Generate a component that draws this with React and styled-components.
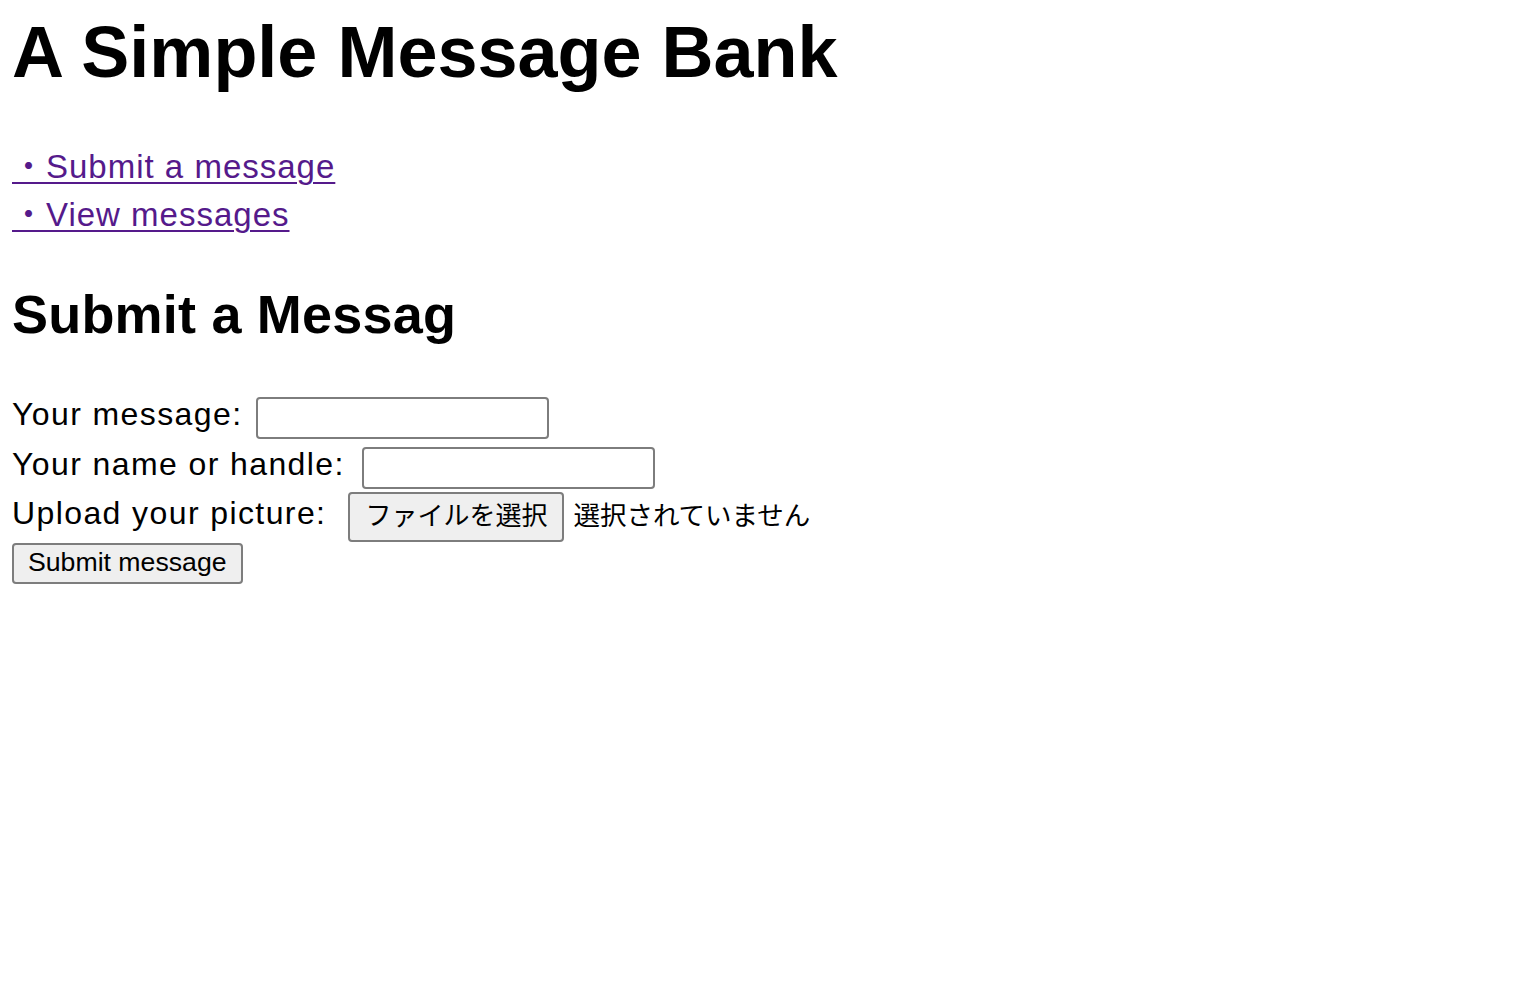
import React from "react";
import styled, { createGlobalStyle } from "styled-components";

const GlobalStyle = createGlobalStyle`
  html, body {
    margin: 0;
    padding: 0;
    background: #ffffff;
    color: #000000;
    font-family: "Liberation Sans", "Noto Sans CJK JP", sans-serif;
  }
  * { box-sizing: border-box; }
`;

const Page = styled.main`
  padding: 11px 12px 40px;
`;

const Title = styled.h1`
  margin: 0;
  font-size: 72px;
  line-height: 82px;
  font-weight: 700;
`;

const Nav = styled.nav`
  margin-top: 50px;
  display: flex;
  flex-direction: column;
  align-items: flex-start;
`;

const NavLink = styled.a`
  font-size: 33px;
  line-height: 48px;
  letter-spacing: 1px;
  color: #551a8b;
  text-decoration: underline;
  text-decoration-thickness: 2px;
  text-underline-offset: 4px;
`;

const SectionTitle = styled.h2`
  margin: 44px 0 0;
  font-size: 54px;
  line-height: 62px;
  font-weight: 700;
  letter-spacing: 0.2px;
`;

const Form = styled.form`
  margin-top: 52px;
  display: flex;
  flex-direction: column;
  align-items: flex-start;
`;

const Row = styled.div`
  display: flex;
  align-items: flex-start;
  gap: ${(p) => p.$gap || 12}px;
  margin-top: ${(p) => p.$top || 0}px;
`;

const Label = styled.label`
  font-size: 32px;
  line-height: 32px;
  letter-spacing: 1.4px;
  margin-top: ${(p) => p.$offset || 0}px;
  white-space: nowrap;
`;

const TextInput = styled.input`
  width: 293px;
  height: 42px;
  border: 2px solid #7d7d7d;
  border-radius: 4px;
  background: #ffffff;
  padding: 2px 6px;
  font-size: 26px;
  font-family: "Liberation Sans", sans-serif;
`;

const FileGroup = styled.div`
  display: flex;
  align-items: center;
  gap: 9px;
`;

const FileButton = styled.button`
  height: 50px;
  padding: 0 15px 6px;
  border: 2px solid #7d7d7d;
  border-radius: 4px;
  background: #efefef;
  color: #000;
  font-family: "Noto Sans CJK JP", sans-serif;
  font-size: 26px;
  line-height: 30px;
  display: flex;
  align-items: center;
`;

const FileStatus = styled.span`
  font-family: "Noto Sans CJK JP", sans-serif;
  font-size: 26.5px;
  line-height: 30px;
  padding-bottom: 6px;
`;

const SubmitButton = styled.button`
  margin-top: 1px;
  height: 41px;
  padding: 0 14px 3px;
  border: 2px solid #7d7d7d;
  border-radius: 4px;
  background: #efefef;
  color: #000;
  font-family: "Liberation Sans", sans-serif;
  font-size: 26.67px;
  line-height: 30px;
`;

export default function App() {
  return (
    <>
      <GlobalStyle />
      <Page>
        <Title>A Simple Message Bank</Title>
        <Nav>
          <NavLink href="#submit">・Submit a message</NavLink>
          <NavLink href="#view">・View messages</NavLink>
        </Nav>
        <SectionTitle>Submit a Messag</SectionTitle>
        <Form onSubmit={(e) => e.preventDefault()}>
          <Row $gap={14}>
            <Label htmlFor="msg" $offset={1}>Your message:</Label>
            <TextInput id="msg" type="text" />
          </Row>
          <Row $top={8} $gap={17}>
            <Label htmlFor="name" $offset={1}>Your name or handle:</Label>
            <TextInput id="name" type="text" />
          </Row>
          <Row $top={3} $gap={22}>
            <Label $offset={5}>Upload your picture:</Label>
            <FileGroup>
              <FileButton type="button">ファイルを選択</FileButton>
              <FileStatus>選択されていません</FileStatus>
            </FileGroup>
          </Row>
          <SubmitButton type="submit">Submit message</SubmitButton>
        </Form>
      </Page>
    </>
  );
}
